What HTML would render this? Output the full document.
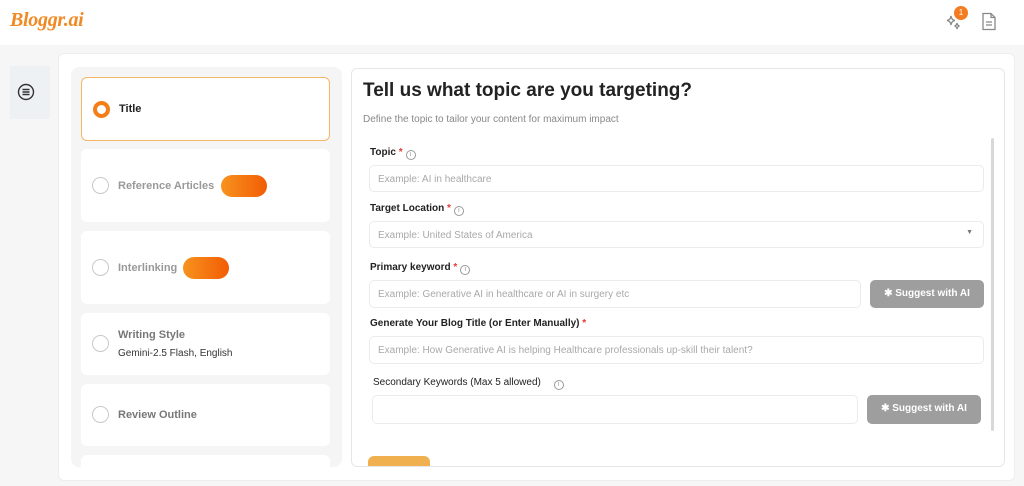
<!DOCTYPE html>
<html><head><style>
*{box-sizing:border-box;margin:0;padding:0}
body{width:1024px;height:486px;overflow:hidden;background:#f6f6f6;font-family:"Liberation Sans",sans-serif;position:relative}
.hdr{position:absolute;left:0;top:0;width:1024px;height:45px;background:#fff}
.logo{position:absolute;left:10px;top:9px;font-family:"Liberation Serif",serif;font-style:italic;font-weight:bold;font-size:20px;color:#f08a24;letter-spacing:-0.3px}
.side{position:absolute;left:10px;top:66px;width:40px;height:53px;background:#eef1f4}
.main{position:absolute;left:58px;top:53px;width:957px;height:428px;background:#fff;border:1px solid #eeeeee;border-radius:6px}
.lp{position:absolute;left:71px;top:67px;width:271px;height:400px;background:#f5f5f5;border-radius:8px;overflow:hidden}
.card{position:absolute;left:10px;width:249px;background:#fff;border-radius:6px}
.radio{position:absolute;left:11px;width:17px;height:17px;border:1.5px solid #c9c9c9;border-radius:50%}
.ct{position:absolute;left:37px;font-size:11px;font-weight:bold;color:#777}
.pill{position:absolute;width:46px;height:22px;border-radius:11px;background:linear-gradient(90deg,#f7931e,#f25c05)}
.rp{position:absolute;left:351px;top:68px;width:654px;height:399px;background:#fff;border:1px solid #e6e6e6;border-radius:6px;overflow:hidden}
h1{position:absolute;left:11px;top:11px;font-size:19px;color:#222;font-weight:bold}
.sub{position:absolute;left:11px;top:45px;font-size:10px;color:#888}
.lb{position:absolute;font-size:10px;color:#222;font-weight:bold}
.lb .s{color:#e53935}
.i{display:inline-block;width:10px;height:10px;border:1px solid #999;border-radius:50%;font-size:7px;color:#999;text-align:center;line-height:8px;vertical-align:-1px;margin-left:3px;font-weight:normal}
.in{position:absolute;height:27px;border:1px solid #ebebeb;border-radius:5px;font-size:10px;color:#a9a9a9;padding:8px 8px}
.btn{position:absolute;width:114px;height:28px;background:#9e9e9e;border-radius:5px;color:#fff;font-size:10px;font-weight:bold;text-align:center;line-height:28px}
</style></head><body>
<div class="hdr"><div class="logo">Bloggr.ai</div>
<svg style="position:absolute;left:944px;top:12px" width="20" height="20" viewBox="0 0 20 20" fill="none" stroke="#888" stroke-width="1.3"><path d="M7 4 Q7.5 8 11 8.5 Q7.5 9 7 13 Q6.5 9 3 8.5 Q6.5 8 7 4Z"/><path d="M13 11 Q13.3 13.5 15.5 14 Q13.3 14.5 13 17 Q12.7 14.5 10.5 14 Q12.7 13.5 13 11Z"/></svg>
<div style="position:absolute;left:954px;top:6px;width:14px;height:14px;border-radius:50%;background:#f47c20;color:#fff;font-size:8px;text-align:center;line-height:14px">1</div>
<svg style="position:absolute;left:981px;top:12px" width="16" height="19" viewBox="0 0 16 19" fill="none" stroke="#888" stroke-width="1.3"><path d="M2 1.5h8l4 4v12H2z"/><path d="M10 1.5v4h4M5 10h6M5 13h6"/></svg>
</div>
<div class="side"><svg style="position:absolute;left:7px;top:17px" width="18" height="18" viewBox="0 0 18 18" fill="none" stroke="#333" stroke-width="1.4"><circle cx="9" cy="9" r="7.5"/><path d="M5.5 6.5h7M5.5 9h7M5.5 11.5h7"/></svg></div>
<div class="main"></div>
<div class="lp">
<div class="card" style="top:10px;height:64px;border:1px solid #f3b766"><div class="radio" style="top:23px;border:4.5px solid #f57f17"></div><div class="ct" style="top:25px;color:#222">Title</div></div>
<div class="card" style="top:82px;height:73px"><div class="radio" style="top:28px"></div><div class="ct" style="top:31px;color:#999">Reference Articles</div><div class="pill" style="left:140px;top:26px"></div></div>
<div class="card" style="top:164px;height:73px"><div class="radio" style="top:28px"></div><div class="ct" style="top:31px;color:#999">Interlinking</div><div class="pill" style="left:102px;top:26px"></div></div>
<div class="card" style="top:246px;height:62px"><div class="radio" style="top:22px"></div><div class="ct" style="top:16px">Writing Style</div><div class="ct" style="top:35px;font-weight:normal;color:#333;font-size:10px">Gemini-2.5 Flash, English</div></div>
<div class="card" style="top:317px;height:62px"><div class="radio" style="top:22px"></div><div class="ct" style="top:25px">Review Outline</div></div>
<div class="card" style="top:388px;height:20px"></div>
</div>
<div class="rp">
<h1>Tell us what topic are you targeting?</h1>
<div class="sub">Define the topic to tailor your content for maximum impact</div>
<div class="lb" style="left:18px;top:78px">Topic <span class="s">*</span><span class="i">i</span></div>
<div class="in" style="left:17px;top:96px;width:615px">Example: AI in healthcare</div>
<div class="lb" style="left:18px;top:134px">Target Location <span class="s">*</span><span class="i">i</span></div>
<div class="in" style="left:17px;top:152px;width:615px">Example: United States of America<span style="position:absolute;right:10px;top:7px;font-size:7px;color:#777">▼</span></div>
<div class="lb" style="left:18px;top:193px">Primary keyword <span class="s">*</span><span class="i">i</span></div>
<div class="in" style="left:17px;top:211px;width:492px;height:28px">Example: Generative AI in healthcare or AI in surgery etc</div>
<div class="btn" style="left:518px;top:211px">✱ Suggest with AI</div>
<div class="lb" style="left:18px;top:249px">Generate Your Blog Title (or Enter Manually) <span class="s">*</span></div>
<div class="in" style="left:17px;top:267px;width:615px;height:28px">Example: How Generative AI is helping Healthcare professionals up-skill their talent?</div>
<div class="lb" style="left:21px;top:308px;font-weight:normal;color:#222">Secondary Keywords (Max 5 allowed) <span class="i" style="margin-left:10px">i</span></div>
<div class="in" style="left:20px;top:326px;width:486px;height:29px"></div>
<div class="btn" style="left:515px;top:326px;height:29px">✱ Suggest with AI</div>
<div style="position:absolute;left:639px;top:69px;width:3px;height:293px;background:#d8d8d8;border-radius:2px"></div>
<div style="position:absolute;left:16px;top:387px;width:62px;height:20px;border-radius:6px;background:#f0b050"></div>
</div>
</body></html>
